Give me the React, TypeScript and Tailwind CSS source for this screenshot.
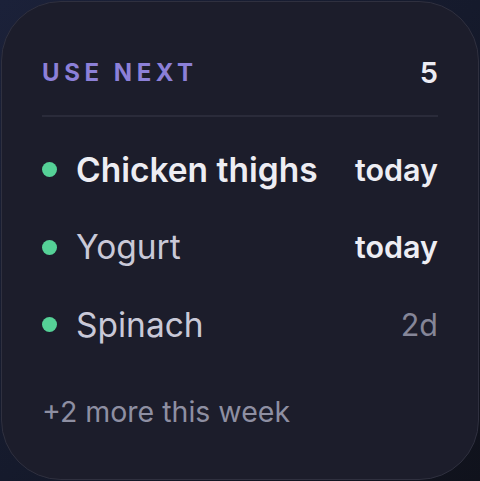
import React from 'react';

type Item = { name: string; when: string; strong: boolean; soon: boolean };

const items: Item[] = [
  { name: 'Chicken thighs', when: 'today', strong: true, soon: true },
  { name: 'Yogurt', when: 'today', strong: false, soon: true },
  { name: 'Spinach', when: '2d', strong: false, soon: false },
];

export default function App() {
  return (
    <div
      className="w-[480px] h-[481px] bg-gradient-to-br from-[#1b2139] via-[#151a2c] to-[#10121c] p-[1px]"
      style={{ fontFamily: 'Inter, "Noto Sans", sans-serif' }}
    >
      <div className="h-full w-full rounded-[60px] border-[1.5px] border-[#2f303f] bg-[#1c1d2b] px-[40px] pt-[52px] flex flex-col">
        {/* header */}
        <div className="flex items-center justify-between h-[38px]">
          <span className="text-[24px] font-bold tracking-[0.19em] text-[#8c80d8]">USE NEXT</span>
          <span className="text-[29px] font-semibold text-[#ececf3]">5</span>
        </div>
        <div className="mt-[23px] h-[2px] bg-[#2a2b3a]" />

        {/* items */}
        <div className="flex flex-col mt-[14px]">
          {items.map((it) => (
            <div key={it.name} className="flex items-center h-[77.5px]">
              <span className="h-[15px] w-[15px] rounded-full bg-[#55d197] shrink-0" />
              <span
                className={
                  it.strong
                    ? 'ml-[19px] text-[33.5px] font-semibold text-[#ededf3]'
                    : 'ml-[19px] text-[33.5px] font-normal text-[#c9c9d8]'
                }
              >
                {it.name}
              </span>
              <span
                className={
                  it.soon
                    ? 'ml-auto text-[30.5px] font-semibold text-[#ededf3]'
                    : 'ml-auto text-[30.5px] font-normal text-[#858698]'
                }
              >
                {it.when}
              </span>
            </div>
          ))}
        </div>

        {/* footer */}
        <div className="mt-[26px] text-[28.5px] leading-[43px] text-[#8e8fa2]">+2 more this week</div>
      </div>
    </div>
  );
}
